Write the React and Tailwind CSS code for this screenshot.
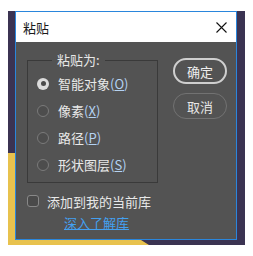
export default function App() {
  const options = [
    { label: "智能对象", key: "O", checked: true },
    { label: "像素", key: "X" },
    { label: "路径", key: "P" },
    { label: "形状图层", key: "S" },
  ];

  return (
    <div
      className="w-[253px] h-[256px] bg-white pt-[11px] pl-[8px]"
      style={{ fontFamily: '"Noto Sans CJK SC", "Noto Sans", sans-serif' }}
    >
      {/* backdrop */}
      <div className="relative w-[237px] h-[234px] bg-[#3b3352] pl-[7px]">
        <svg className="absolute inset-0" width="237" height="234" viewBox="0 0 237 234">
          <polygon points="0,142 0,234 141,234 133,229 7,142" fill="#e8c24e" />
        </svg>

        {/* dialog */}
        <div className="relative w-[222px] h-[229px] border border-[#2a86dc] flex flex-col">
          <div className="h-[30px] bg-white flex items-center justify-between pl-[7px] pr-[9px]">
            <span className="text-[13px] text-[#1a1a1a] leading-none">粘贴</span>
            <svg width="11" height="11" viewBox="0 0 11 11">
              <path d="M0.5 0.5 L10.5 10.5 M10.5 0.5 L0.5 10.5" stroke="#111" strokeWidth="1.1" />
            </svg>
          </div>

          <div className="flex-1 bg-[#535353] pl-[11px]">
            <div className="flex items-start">
              <fieldset className="mt-[11px] w-[131px] border border-[#3a3a3a] pl-[9px] pt-[3px] pb-[4px]">
                <legend className="ml-[15px] px-[5px] text-[13px] leading-[14px] text-[#e6e6e6]">
                  粘贴为:
                </legend>
                {options.map((o) => (
                  <div key={o.key} className="h-[27px] flex items-center gap-[9px]">
                    {o.checked ? (
                      <span className="w-[12px] h-[12px] rounded-full bg-[#dcdcdc] flex items-center justify-center">
                        <span className="w-[5px] h-[5px] rounded-full bg-[#4a4a4a]" />
                      </span>
                    ) : (
                      <span className="w-[12px] h-[12px] rounded-full border border-[#7a7a7a] bg-[#4d4d4d]" />
                    )}
                    <span className="text-[13px] leading-none text-[#e8e8e8] whitespace-nowrap">
                      {o.label}
                      <span className="text-[#b4d2f2]">
                        (<span className="underline">{o.key}</span>)
                      </span>
                    </span>
                  </div>
                ))}
              </fieldset>

              <div className="mt-[16px] ml-[15px] flex flex-col gap-[9px]">
                <button className="w-[54px] h-[26px] rounded-full border-2 border-[#cfcfcf] text-[13px] text-[#eeeeee] leading-none flex items-center justify-center">
                  确定
                </button>
                <button className="w-[54px] h-[26px] rounded-full border border-[#727272] text-[13px] text-[#e6e6e6] leading-none flex items-center justify-center">
                  取消
                </button>
              </div>
            </div>

            <div className="mt-[10px] h-[16px] flex items-center gap-[8px]">
              <span className="w-[12px] h-[12px] rounded-[3px] border border-[#888888] bg-[#4a4a4a]" />
              <span className="text-[13px] leading-none text-[#e8e8e8]">添加到我的当前库</span>
            </div>

            <div className="mt-[5px] h-[16px] flex items-center pl-[37px]">
              <span className="text-[13px] leading-none text-[#43a0f0] underline">深入了解库</span>
            </div>
          </div>
        </div>
      </div>
    </div>
  );
}
